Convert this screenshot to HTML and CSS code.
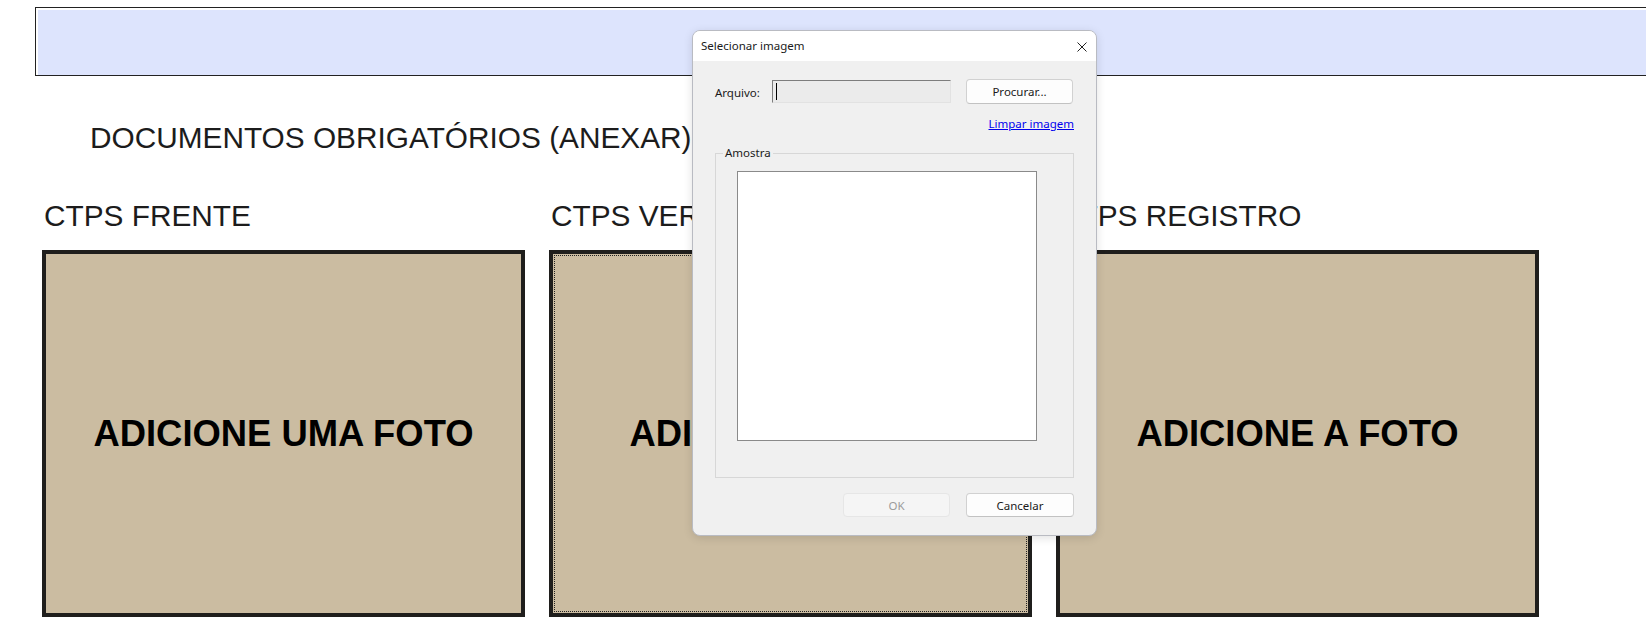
FILE: index.html
```html
<!DOCTYPE html>
<html lang="pt-BR">
<head>
    <meta charset="UTF-8">
    <meta name="viewport" content="width=device-width, initial-scale=1.0">
    <title>Documentos obrigatórios</title>
    <link rel="stylesheet" href="styles.css">
</head>
<body>

    <div class="page-header">
        <div class="page-header-fill"></div>
    </div>

    <h1 class="doc-title">DOCUMENTOS OBRIGATÓRIOS (ANEXAR)</h1>

    <div class="slots">
        <div class="slot">
            <div class="slot-label">CTPS FRENTE</div>
            <div class="photo-box">ADICIONE UMA FOTO</div>
        </div>
        <div class="slot">
            <div class="slot-label">CTPS VERSO</div>
            <div class="photo-box focused">ADICIONE A FOTO</div>
        </div>
        <div class="slot">
            <div class="slot-label">CTPS REGISTRO</div>
            <div class="photo-box">ADICIONE A FOTO</div>
        </div>
    </div>

    <!-- janela de seleção de imagem -->
    <div class="dialog">
        <div class="dialog-title">
            <span>Selecionar imagem</span>
            <svg class="close-icon" width="10" height="10" viewBox="0 0 10 10">
                <path d="M0.5 0.5 L9.5 9.5 M9.5 0.5 L0.5 9.5" stroke="#222" stroke-width="1" fill="none"/>
            </svg>
        </div>
        <div class="dialog-body">
            <div class="file-row">
                <label class="file-label">Arquivo:</label>
                <div class="file-input"><span class="caret"></span></div>
                <button class="win-btn">Procurar...</button>
            </div>
            <div class="link-row"><a href="#">Limpar imagem</a></div>
            <fieldset class="preview-group">
                <legend>Amostra</legend>
                <div class="preview"></div>
            </fieldset>
            <div class="dialog-buttons">
                <button class="win-btn" disabled>OK</button>
                <button class="win-btn cancel">Cancelar</button>
            </div>
        </div>
    </div>

</body>
</html>
```

FILE: styles.css
```css
body {
    margin: 0;
    font-family: "Liberation Sans", Arial, sans-serif;
    color: #1c1c1c;
    background: #fff;
    overflow: hidden;
}

/* faixa do topo */
.page-header {
    height: 69px;
    margin: 7px -40px 0 35px;
    padding: 2px 0 0 2px;
    border: 1px solid #222;
    border-right: none;
    box-sizing: border-box;
    background: #fff;
}

.page-header-fill {
    height: 100%;
    background: #dde4fd;
}

.doc-title {
    margin: 45px 0 0 90px;
    font-size: 29.8px;
    line-height: 34px;
    font-weight: normal;
}

.slots {
    display: flex;
    gap: 24px;
    margin: 44px 0 0 42px;
}

.slot {
    width: 483px;
    flex-shrink: 0;
}

.slot-label {
    font-size: 29.8px;
    line-height: 34px;
    padding-left: 2px;
    margin-bottom: 17px;
}

.photo-box {
    height: 367px;
    border: 4px solid #1f1e1c;
    box-sizing: border-box;
    background: #cbbca1;
    display: flex;
    align-items: center;
    justify-content: center;
    font-size: 36.4px;
    font-weight: bold;
    color: #000;
}

.photo-box.focused {
    outline: 1px dotted #222;
    outline-offset: -6px;
}

/* dialogo */
.dialog {
    position: absolute;
    left: 692px;
    top: 30px;
    width: 405px;
    height: 506px;
    box-sizing: border-box;
    border: 1px solid #b9bbc2;
    border-radius: 8px;
    background: #f0f0f0;
    overflow: hidden;
    box-shadow: 0 2px 10px rgba(0, 0, 0, 0.12);
    font-family: "Noto Sans", "Open Sans", sans-serif;
    font-size: 11.5px;
    line-height: 16px;
    color: #1a1a1a;
}

.dialog-title {
    height: 30px;
    display: flex;
    align-items: center;
    justify-content: space-between;
    padding: 0 9px 0 8px;
    background: #fff;
}

.close-icon {
    display: block;
    margin-top: 1px;
}

.dialog-body {
    padding: 0 22px;
}

.file-row {
    display: flex;
    align-items: center;
    height: 25px;
    margin-top: 18px;
}

.file-label {
    width: 57px;
    padding-top: 2px;
}

.file-input {
    width: 179px;
    height: 23px;
    box-sizing: border-box;
    border: 1px solid #e2e2e2;
    border-top-color: #7d7d7d;
    border-left-color: #7d7d7d;
    background: #ebebeb;
    padding: 2px 0 0 3px;
}

.caret {
    display: block;
    width: 1px;
    height: 17px;
    background: #000;
}

.win-btn {
    width: 107px;
    height: 25px;
    margin-left: 15px;
    padding: 0;
    box-sizing: border-box;
    border: 1px solid #d1d1d1;
    border-bottom-color: #c2c2c2;
    border-radius: 4px;
    background: #fdfdfd;
    font-family: inherit;
    font-size: 11.5px;
    color: #1a1a1a;
}

.win-btn:disabled {
    background: #f5f5f5;
    border-color: #e6e6e6;
    color: #9b9b9b;
}

.link-row {
    text-align: right;
    margin-top: 12px;
}

.link-row a {
    color: #0000ee;
}

.preview-group {
    width: 359px;
    margin: 13px 0 0 0;
    padding: 10px 0 36px 7px;
    box-sizing: border-box;
    border: 1px solid #d7d7d7;
}

.preview-group legend {
    padding: 0 2px;
    line-height: 16px;
}

.preview {
    width: 300px;
    height: 270px;
    margin-left: 14px;
    box-sizing: border-box;
    border: 1px solid #8a8a8a;
    background: #fff;
}

.dialog-buttons {
    display: flex;
    justify-content: flex-end;
    margin-top: 15px;
}

.dialog-buttons .win-btn {
    height: 24px;
    margin-left: 16px;
}

.dialog-buttons .cancel {
    width: 108px;
}
```
